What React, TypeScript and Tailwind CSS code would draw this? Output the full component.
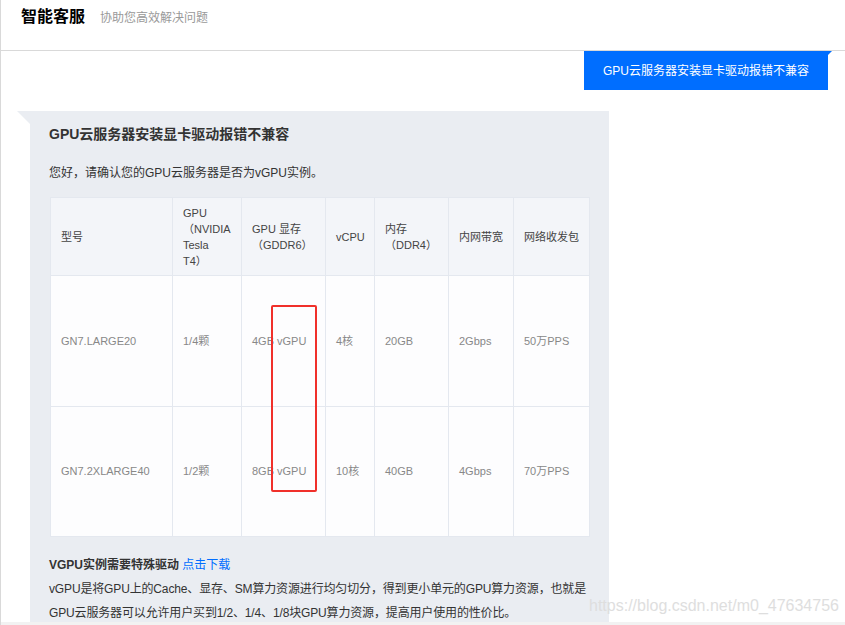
import React from "react";

const headers: React.ReactNode[] = [
  "型号",
  <>GPU<br />（NVIDIA<br />Tesla<br />T4）</>,
  <>GPU 显存<br />（GDDR6）</>,
  "vCPU",
  <>内存<br />（DDR4）</>,
  "内网带宽",
  "网络收发包",
];

const rows = [
  ["GN7.LARGE20", "1/4颗", "4GB vGPU", "4核", "20GB", "2Gbps", "50万PPS"],
  ["GN7.2XLARGE40", "1/2颗", "8GB vGPU", "10核", "40GB", "4Gbps", "70万PPS"],
];

const widths = [122, 69, 84, 49, 74, 65, 76];

export default function App() {
  return (
    <div className="relative w-[845px] h-[625px] overflow-hidden bg-white border-l border-[#d9d9d9] font-['Liberation_Sans','Noto_Sans_CJK_SC',sans-serif]">
      {/* header */}
      <div className="h-[51px] border-b border-[#d9d9d9] flex items-baseline pl-[20px] pt-[5px]">
        <span className="text-[16px] font-bold text-black leading-[24px]">智能客服</span>
        <span className="ml-[15px] text-[12px] text-[#999] leading-[24px]">协助您高效解决问题</span>
      </div>

      {/* user bubble */}
      <div className="flex justify-end pr-[17px]">
        <div className="relative w-[244px] h-[39px] bg-[#006eff] text-white text-[12px] flex items-center justify-center">
          GPU云服务器安装显卡驱动报错不兼容
          <div className="absolute right-[-4px] top-0 w-0 h-0 border-t-[4px] border-t-[#006eff] border-r-[4px] border-r-transparent" />
        </div>
      </div>

      {/* answer card */}
      <div className="relative ml-[29px] mt-[21px] w-[579px] bg-[#eaedf2] pl-[19px] pr-[20px] pt-[13px] pb-[20px] text-[#333]">
        <div className="absolute left-[-13px] top-0 w-0 h-0 border-t-[13px] border-t-[#eaedf2] border-l-[13px] border-l-transparent" />
        <div className="text-[14px] font-bold leading-[20px] text-[#333]">GPU云服务器安装显卡驱动报错不兼容</div>
        <div className="mt-[20px] text-[12px] leading-[18px]">您好，请确认您的GPU云服务器是否为vGPU实例。</div>

        <div className="relative ml-[1px] mt-[15px] w-[539px]">
          <table className="table-fixed border-collapse w-[539px] text-[11px]">
            <colgroup>
              {widths.map((w, i) => (
                <col key={i} style={{ width: w }} />
              ))}
            </colgroup>
            <thead>
              <tr className="h-[78px] bg-[#f3f5f9]">
                {headers.map((h, i) => (
                  <th key={i} className="border border-[#e4e8ef] pl-[10px] pr-[6px] text-left font-normal align-middle leading-[16px] text-[#444]">
                    {h}
                  </th>
                ))}
              </tr>
            </thead>
            <tbody>
              {rows.map((r, ri) => (
                <tr key={ri} className={ri === 0 ? "h-[131px] bg-[#fdfdfe]" : "h-[130px] bg-[#fdfdfe]"}>
                  {r.map((c, ci) => (
                    <td key={ci} className="border border-[#e4e8ef] pl-[10px] pr-[4px] align-middle text-[#888] whitespace-nowrap">
                      {c}
                    </td>
                  ))}
                </tr>
              ))}
            </tbody>
          </table>
          <div className="absolute left-[221px] top-[108px] w-[46px] h-[187px] border-2 border-[#f0302a] rounded-[2px]" />
        </div>

        <div className="mt-[16px] text-[12px] leading-[24px]">
          <span className="font-bold">VGPU实例需要特殊驱动</span>{" "}
          <span className="text-[#006eff]">点击下载</span>
        </div>
        <div className="text-[12px] leading-[24px] whitespace-nowrap tracking-[-0.15px]">vGPU是将GPU上的Cache、显存、SM算力资源进行均匀切分，得到更小单元的GPU算力资源，也就是</div>
        <div className="text-[12px] leading-[24px] whitespace-nowrap tracking-[-0.15px]">GPU云服务器可以允许用户买到1/2、1/4、1/8块GPU算力资源，提高用户使用的性价比。</div>
      </div>

      {/* watermark */}
      <div className="absolute left-[588px] top-[596px] text-[16px] text-[#dedede] leading-[20px] whitespace-nowrap font-['Liberation_Sans',sans-serif]">
        https://blog.csdn.net/m0_47634756
      </div>
      <div className="absolute left-0 right-0 bottom-0 h-[3px] bg-[#f2f2f2]" />
    </div>
  );
}
